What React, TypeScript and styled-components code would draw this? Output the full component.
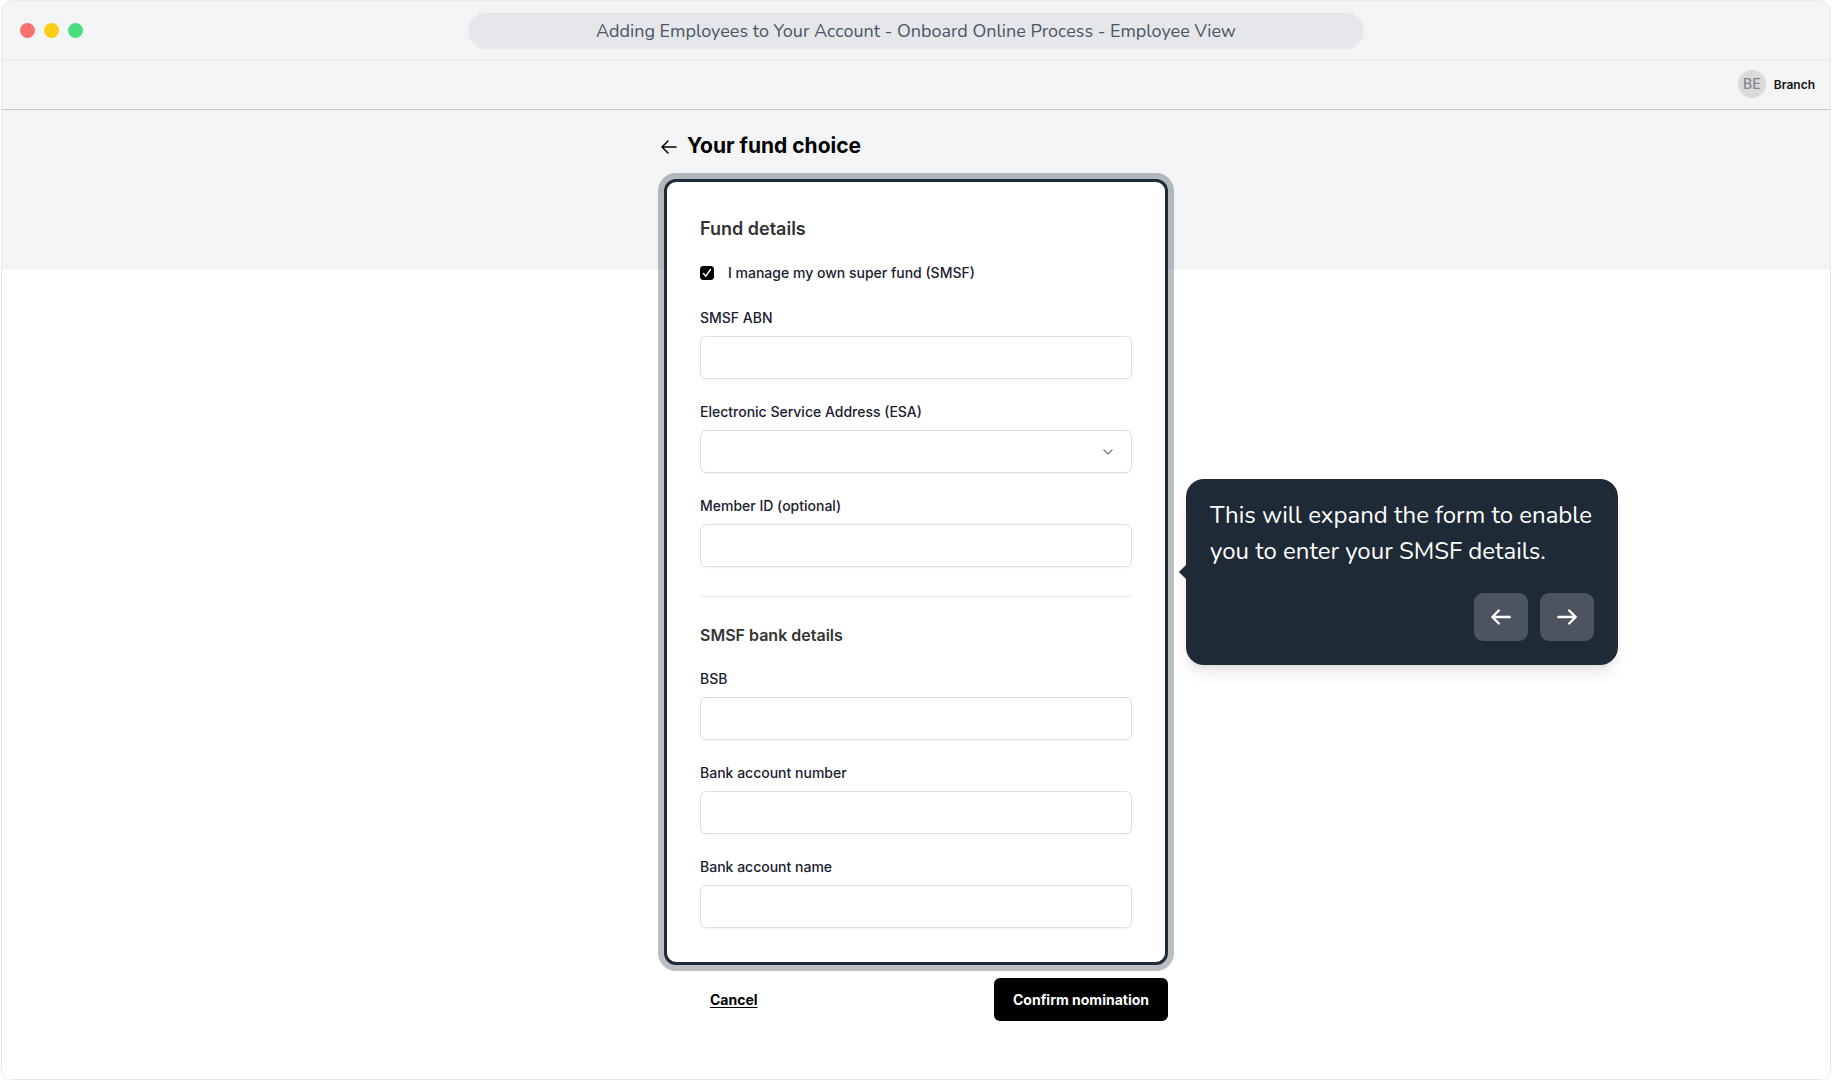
import React, { useState } from "react";
import styled, { createGlobalStyle } from "styled-components";

const ui = `Inter, "Liberation Sans", sans-serif`;
const rounded = `Nunito, "Noto Sans", "Open Sans", sans-serif`;

const GlobalStyle = createGlobalStyle`
  *, *::before, *::after { box-sizing: border-box; }
  body { margin: 0; background: #fff; font-family: ${ui}; }
  h1, h2, p { margin: 0; }
  button, input, select { font: inherit; }
`;

const Window = styled.div`
  display: flex;
  flex-direction: column;
  min-height: 100vh;
  margin: 0 1px;
  border: 1px solid #e5e7eb;
  border-radius: 12px;
  background: #fff;
  overflow: hidden;
`;

const TitleBar = styled.header`
  display: grid;
  grid-template-columns: 1fr minmax(0, 896px) 1fr;
  align-items: center;
  height: 60px;
  padding: 0 18px;
  border-bottom: 1px solid #e5e7eb;
  background: #f3f4f6;
`;

const Dots = styled.div`
  display: flex;
  gap: 9px;
`;

const Dot = styled.span<{ $color: string }>`
  width: 15px;
  height: 15px;
  border-radius: 50%;
  background: ${(p) => p.$color};
`;

const WindowTitle = styled.div`
  height: 36px;
  border-radius: 18px;
  background: #e5e7eb;
  color: #4b5563;
  font-family: ${rounded};
  font-size: 18px;
  line-height: 36px;
  text-align: center;
  white-space: nowrap;
  overflow: hidden;
  text-overflow: ellipsis;
`;

const AppBar = styled.div`
  display: flex;
  align-items: center;
  justify-content: flex-end;
  gap: 8px;
  height: 49px;
  padding: 0 15px 2px;
  border-bottom: 1px solid #c4c8cc;
  background: #f3f4f6;
`;

const Avatar = styled.span`
  width: 28px;
  height: 28px;
  border-radius: 50%;
  background: #d9dadc;
  color: #85878a;
  font-size: 14px;
  font-weight: 500;
  line-height: 28px;
  text-align: center;
`;

const UserName = styled.span`
  color: #111;
  font-size: 12px;
  font-weight: 600;
`;

const Main = styled.main`
  flex: 1;
  padding: 21px 16px 32px;
  background: linear-gradient(#f3f4f6 160px, #fff 160px);
`;

const Column = styled.div`
  max-width: 516px;
  margin: 0 auto;
`;

const PageHeader = styled.div`
  display: flex;
  align-items: center;
  gap: 5px;
  margin-bottom: 12px;
`;

const BackButton = styled.button`
  display: flex;
  padding: 0;
  border: 0;
  background: none;
  color: #000;
  cursor: pointer;
`;

const PageTitle = styled.h1`
  color: #000;
  font-size: 21px;
  font-weight: 700;
  line-height: 30px;
`;

const Highlight = styled.div`
  position: relative;
  padding: 6px;
  border-radius: 18px;
  background: rgba(31, 42, 55, 0.3);
`;

const Card = styled.div`
  padding: 35px 33px 34px;
  border: 3px solid #1f2a37;
  border-radius: 12px;
  background: #fff;
`;

const SectionTitle = styled.h2<{ $small?: boolean }>`
  color: #333;
  font-size: ${(p) => (p.$small ? 16 : 18)}px;
  font-weight: 600;
  line-height: 24px;
  margin-bottom: 22px;
`;

const CheckRow = styled.div`
  display: flex;
  align-items: center;
  gap: 14px;
  margin-bottom: 25px;
`;

const CheckWrap = styled.span`
  position: relative;
  display: flex;
  width: 14px;
  height: 14px;
  color: #fff;

  svg {
    position: absolute;
    inset: 0;
    pointer-events: none;
  }
`;

const Check = styled.input`
  appearance: none;
  width: 14px;
  height: 14px;
  margin: 0;
  border: 1px solid #000;
  border-radius: 3px;
  background: #fff;

  &:checked { background: #000; }
`;

const Label = styled.label`
  color: #1a2030;
  font-size: 14px;
  font-weight: 500;
  line-height: 20px;
`;

const Fields = styled.div`
  display: flex;
  flex-direction: column;
  gap: 23px;
`;

const FieldBox = styled.div`
  display: flex;
  flex-direction: column;
  gap: 8px;
`;

const fieldStyle = `
  width: 100%;
  height: 43px;
  padding: 0 14px;
  border: 1px solid #dddfe2;
  border-radius: 6px;
  background: #fff;
  box-shadow: 0 1px 2px rgba(0, 0, 0, 0.05);
  color: #1a2030;
  font-size: 14px;
`;

const TextInput = styled.input`
  ${fieldStyle}
`;

const SelectWrap = styled.div`
  position: relative;

  svg {
    position: absolute;
    top: 14px;
    right: 16px;
    pointer-events: none;
  }
`;

const Select = styled.select`
  ${fieldStyle}
  display: block;
  appearance: none;
`;

const Divider = styled.hr`
  height: 1px;
  margin: 29px 0 26px;
  border: 0;
  background: #e5e7eb;
`;

const Actions = styled.div`
  display: flex;
  align-items: center;
  justify-content: space-between;
  padding: 7px 6px 0 52px;
`;

const CancelLink = styled.a`
  color: #000;
  font-size: 14px;
  font-weight: 700;
  text-underline-offset: 2px;
`;

const ConfirmButton = styled.button`
  height: 43px;
  padding: 0 19px;
  border: 0;
  border-radius: 6px;
  background: #000;
  color: #fff;
  font-size: 14px;
  font-weight: 700;
  cursor: pointer;
`;

const Callout = styled.aside`
  position: absolute;
  top: 50%;
  left: calc(100% + 12px);
  width: 432px;
  padding: 18px 24px 24px;
  border-radius: 18px;
  background: #1f2a37;
  box-shadow: 0 10px 15px -3px rgba(0, 0, 0, 0.1), 0 4px 6px -4px rgba(0, 0, 0, 0.1);
  transform: translateY(-50%);

  &::before {
    content: "";
    position: absolute;
    top: calc(50% - 5px);
    left: -5px;
    width: 10px;
    height: 10px;
    background: #1f2a37;
    transform: rotate(45deg);
  }
`;

const CalloutText = styled.p`
  color: #fff;
  font-family: ${rounded};
  font-size: 24px;
  font-weight: 400;
  line-height: 36px;
`;

const CalloutNav = styled.div`
  display: flex;
  justify-content: flex-end;
  gap: 12px;
  margin-top: 24px;
`;

const NavButton = styled.button`
  display: grid;
  place-items: center;
  width: 54px;
  height: 48px;
  padding: 0;
  border: 0;
  border-radius: 9px;
  background: #4d5460;
  color: #fff;
  cursor: pointer;
`;

function Icon({ d, size, stroke, color = "currentColor" }: { d: string; size: number; stroke: number; color?: string }) {
  return (
    <svg width={size} height={size} viewBox="0 0 24 24" fill="none" stroke={color} strokeWidth={stroke} strokeLinecap="round" strokeLinejoin="round" aria-hidden="true">
      <path d={d} />
    </svg>
  );
}

function TextField({ id, label }: { id: string; label: string }) {
  return (
    <FieldBox>
      <Label htmlFor={id}>{label}</Label>
      <TextInput id={id} type="text" />
    </FieldBox>
  );
}

export default function App() {
  const [smsf, setSmsf] = useState(true);

  return (
    <>
      <GlobalStyle />
      <Window>
        <TitleBar>
          <Dots>
            <Dot $color="#f87171" />
            <Dot $color="#facc15" />
            <Dot $color="#4ade80" />
          </Dots>
          <WindowTitle>Adding Employees to Your Account - Onboard Online Process - Employee View</WindowTitle>
        </TitleBar>
        <AppBar>
          <Avatar>BE</Avatar>
          <UserName>Branch</UserName>
        </AppBar>
        <Main>
          <Column>
            <PageHeader>
              <BackButton type="button" aria-label="Back">
                <Icon d="M18 13H4M10 7l-6 6 6 6" size={24} stroke={1.5} />
              </BackButton>
              <PageTitle>Your fund choice</PageTitle>
            </PageHeader>
            <Highlight>
              <Card>
                <SectionTitle>Fund details</SectionTitle>
                <CheckRow>
                  <CheckWrap>
                    <Check id="smsf" type="checkbox" checked={smsf} onChange={(e) => setSmsf(e.target.checked)} />
                    {smsf && <Icon d="M6 13l4 4.500L18 6" size={14} stroke={2.4} />}
                  </CheckWrap>
                  <Label htmlFor="smsf">I manage my own super fund (SMSF)</Label>
                </CheckRow>
                <Fields>
                  <TextField id="abn" label="SMSF ABN" />
                  <FieldBox>
                    <Label htmlFor="esa">Electronic Service Address (ESA)</Label>
                    <SelectWrap>
                      <Select id="esa" defaultValue="">
                        <option value="" />
                      </Select>
                      <Icon d="M6 9l6 6 6-6" size={16} stroke={2} color="#808388" />
                    </SelectWrap>
                  </FieldBox>
                  <TextField id="member" label="Member ID (optional)" />
                </Fields>
                <Divider />
                <SectionTitle $small>SMSF bank details</SectionTitle>
                <Fields>
                  <TextField id="bsb" label="BSB" />
                  <TextField id="number" label="Bank account number" />
                  <TextField id="name" label="Bank account name" />
                </Fields>
              </Card>
              <Callout>
                <CalloutText>This will expand the form to enable you to enter your SMSF details.</CalloutText>
                <CalloutNav>
                  <NavButton type="button" aria-label="Previous">
                    <Icon d="M20 12H4M10 6l-6 6 6 6" size={26} stroke={2.2} />
                  </NavButton>
                  <NavButton type="button" aria-label="Next">
                    <Icon d="M4 12h16M14 6l6 6-6 6" size={26} stroke={2.2} />
                  </NavButton>
                </CalloutNav>
              </Callout>
            </Highlight>
            <Actions>
              <CancelLink href="#cancel">Cancel</CancelLink>
              <ConfirmButton type="button">Confirm nomination</ConfirmButton>
            </Actions>
          </Column>
        </Main>
      </Window>
    </>
  );
}
